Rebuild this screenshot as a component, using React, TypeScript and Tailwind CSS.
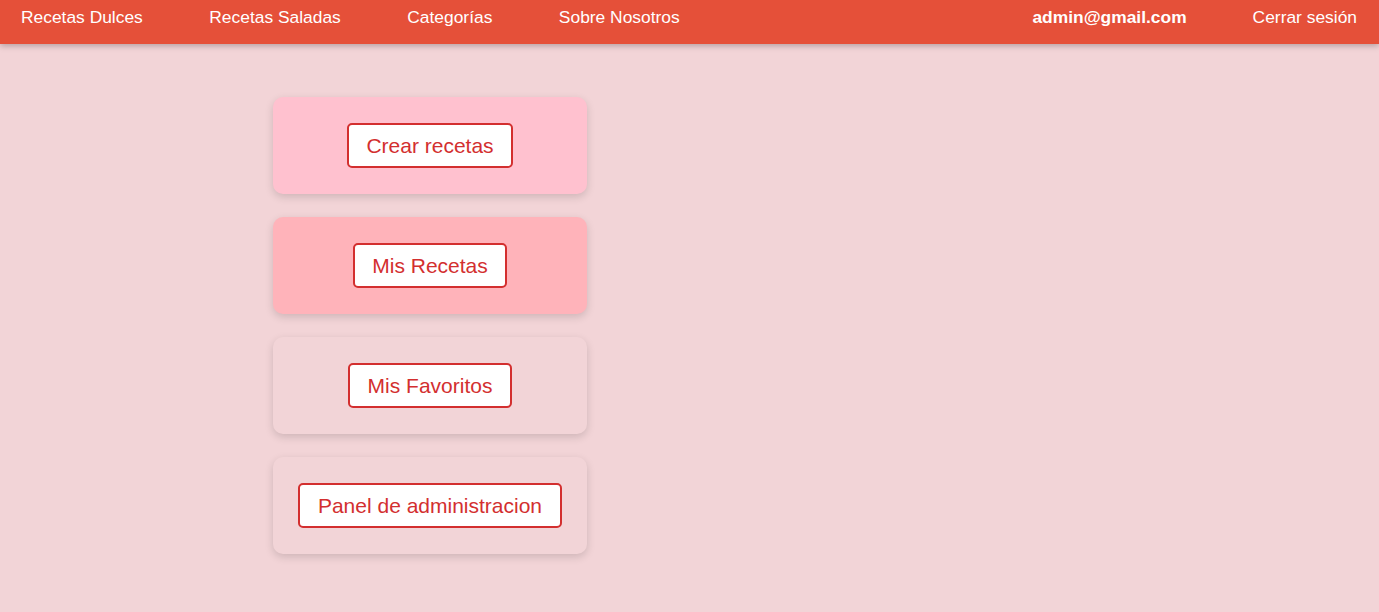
import React from "react";

const cards = [
  { label: "Crear recetas", bg: "bg-[#ffc1cf]" },
  { label: "Mis Recetas", bg: "bg-[#ffb3ba]" },
  { label: "Mis Favoritos", bg: "bg-[#f2d4d7]" },
  { label: "Panel de administracion", bg: "bg-[#f2d4d7]" },
];

export default function App() {
  return (
    <div
      className="min-h-[612px] w-full bg-[#f2d4d7]"
      style={{ fontFamily: '"Liberation Sans", Arial, sans-serif' }}
    >
      <header className="relative z-10 flex h-[44px] items-start justify-between bg-[#e55039] pl-[21px] pr-[22px] pt-[7px] text-[17.4px] leading-[20px] text-white shadow-[0_2px_6px_rgba(0,0,0,0.25)]">
        <nav className="flex items-center gap-[66.5px]">
          <span>Recetas Dulces</span>
          <span>Recetas Saladas</span>
          <span>Categorías</span>
          <span>Sobre Nosotros</span>
        </nav>
        <div className="flex items-center gap-[66px]">
          <span className="font-bold">admin@gmail.com</span>
          <span>Cerrar sesión</span>
        </div>
      </header>
      <main className="flex flex-col gap-[23px] pl-[273px] pt-[53px]">
        {cards.map((c) => (
          <div
            key={c.label}
            className={`flex w-[314px] items-center justify-center rounded-[10px] py-[26px] shadow-[0_3px_8px_rgba(0,0,0,0.15)] ${c.bg}`}
          >
            <button className="rounded-[5px] border-2 border-[#d32f2f] bg-white px-[17.5px] py-[9px] text-[21px] leading-[23px] text-[#d32f2f]">
              {c.label}
            </button>
          </div>
        ))}
      </main>
    </div>
  );
}
